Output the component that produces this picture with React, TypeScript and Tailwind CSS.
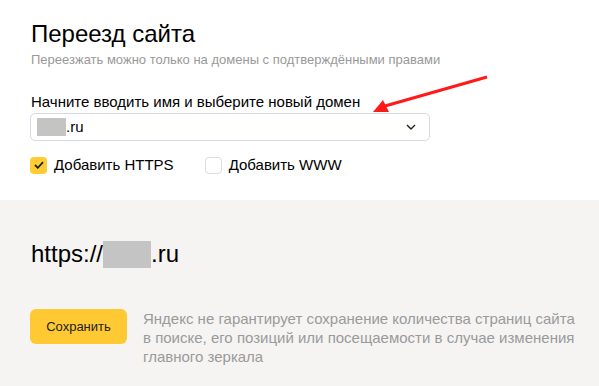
const Chevron = () => (
    <svg width="10" height="6" viewBox="0 0 10 6" fill="none">
        <path d="M1 1l4 4 4-4" stroke="#222" strokeWidth="1.4" />
    </svg>
);

const Check = () => (
    <svg width="10" height="8" viewBox="0 0 10 8" fill="none">
        <path d="M1 4l2.8 2.8L9 1.2" stroke="#222" strokeWidth="1.8" />
    </svg>
);

const App = () => {
    return (
        <div className="relative w-[599px] h-[386px] bg-white font-['Liberation_Sans',Arial,sans-serif] text-black overflow-hidden">
            <section className="h-[200px] px-[30px] pt-[20px]">
                <h1 className="text-[24px] leading-[28px] pl-px">Переезд сайта</h1>
                <p className="text-[13px] leading-[16px] text-[#999] pl-px mt-[4px]">Переезжать можно только на домены с подтверждёнными правами</p>
                <label className="block text-[15px] leading-[18px] pl-px mt-[25px]">Начните вводить имя и выберите новый домен</label>
                <div className="mt-[2px] w-[400px] h-[28px] border border-[#d7d9e2] rounded-[5px] flex items-center pl-[6px] pr-[13px]">
                    <span className="w-[29px] h-[18px] bg-[#c4c4c4]" />
                    <span className="text-[15px] leading-[18px]">.ru</span>
                    <span className="ml-auto flex"><Chevron /></span>
                </div>
                <div className="flex items-center mt-[15px] text-[15px] leading-[18px]">
                    <span className="w-[17px] h-[17px] rounded-[4px] bg-[#ffcc33] flex items-center justify-center"><Check /></span>
                    <span className="ml-[7px]">Добавить HTTPS</span>
                    <span className="ml-[31px] w-[17px] h-[17px] rounded-[4px] border border-[#dcdcdc] bg-white" />
                    <span className="ml-[7px]">Добавить WWW</span>
                </div>
            </section>
            <section className="h-[186px] bg-[#f5f4f3] px-[30px] pt-[40px]">
                <div className="flex items-center text-[24px] leading-[28px] pl-px">
                    <span>https://</span>
                    <span className="w-[48px] h-[27px] bg-[#c4c4c4]" />
                    <span>.ru</span>
                </div>
                <div className="flex mt-[41px]">
                    <button className="w-[97px] h-[35px] shrink-0 rounded-[6px] bg-[#ffc933] text-[13px] text-[#222]">Сохранить</button>
                    <p className="ml-[16px] whitespace-nowrap text-[15px] leading-[19px] text-[#9a9a9a]">
                        Яндекс не гарантирует сохранение количества страниц сайта<br />
                        в поиске, его позиций или посещаемости в случае изменения<br />
                        главного зеркала
                    </p>
                </div>
            </section>
            <svg className="absolute left-0 top-0" width="599" height="386" viewBox="0 0 599 386">
                <line x1="487" y1="77" x2="385" y2="106" stroke="#ff1a1a" strokeWidth="3" />
                <polygon points="373,112 383,100 389,112" fill="#ff1a1a" />
            </svg>
        </div>
    );
};

export default App;
